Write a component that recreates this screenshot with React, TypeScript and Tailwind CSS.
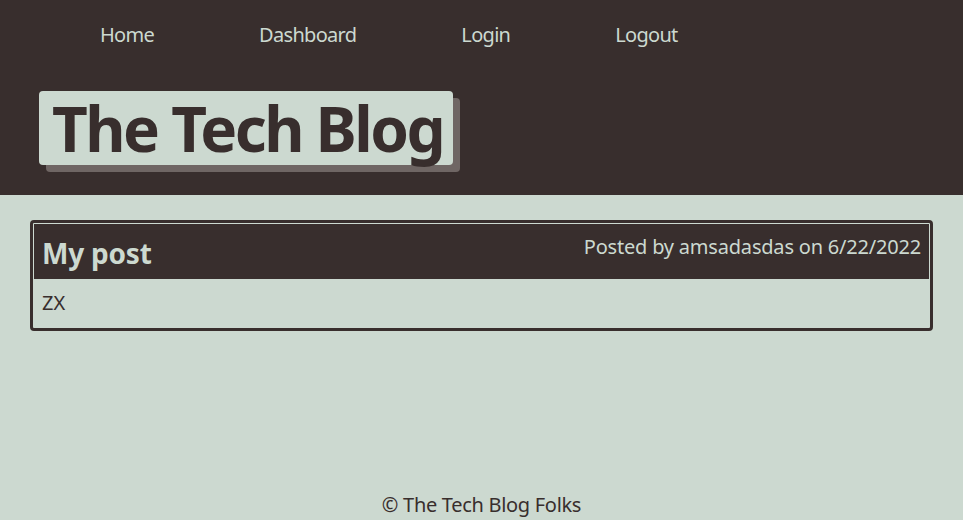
export default function App() {
  const font = { fontFamily: '"Noto Sans", "Open Sans", sans-serif' };
  return (
    <div className="min-h-[520px] bg-[#ccd9d0] flex flex-col text-[#382e2d]" style={font}>
      <header className="bg-[#382e2d] h-[195px] flex flex-col">
        <nav className="flex items-center h-[70px] pl-[100px] gap-[105px] text-[20px] tracking-[-0.7px] text-[#ccd9d0]">
          <a>Home</a>
          <a>Dashboard</a>
          <a>Login</a>
          <a>Logout</a>
        </nav>
        <div className="pl-[39px] pt-[21px]">
          <h1 className="w-[414px] whitespace-nowrap bg-[#ccd9d0] rounded-[4px] pl-[13px] h-[74px] leading-[74px] text-[62px] tracking-[-2.5px] font-bold text-[#382e2d] shadow-[7px_7px_0_#6f6664]">
            The Tech Blog
          </h1>
        </div>
      </header>
      <main className="flex-1 px-[30px] pt-[25px]">
        <div className="border-[3px] border-[#382e2d] rounded-[4px] p-px">
          <div className="bg-[#382e2d] h-[55px] flex justify-between items-start pl-[8px] pr-[8px] text-[#ccd9d0]">
            <h2 className="text-[28px] font-bold mt-[9px] leading-[40px] tracking-[-0.2px]">My post</h2>
            <span className="text-[20px] mt-[9px] leading-[28px] tracking-[-0.2px]">Posted by amsadasdas on 6/22/2022</span>
          </div>
          <div className="px-[8px] h-[48px] flex items-center text-[20px]">ZX</div>
        </div>
      </main>
      <footer className="text-center text-[20px] tracking-[-0.3px] pb-[1px] leading-[28px]">© The Tech Blog Folks</footer>
    </div>
  );
}
